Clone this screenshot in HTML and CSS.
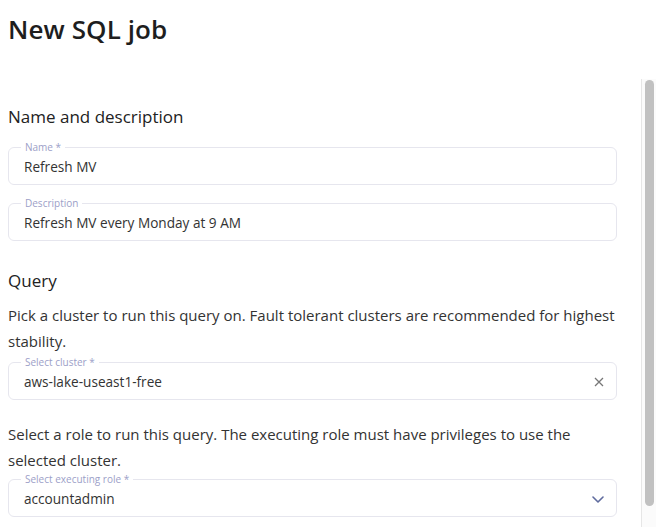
FILE: index.html
```html
<!DOCTYPE html>
<html>
<head>
<meta charset="utf-8">
<link rel="stylesheet" href="styles.css">
</head>
<body>
<h1 class="title">New SQL job</h1>
<div class="scroller">
  <div class="content">
    <h2 class="section">Name and description</h2>
    <fieldset class="field"><legend>Name *</legend><div class="value">Refresh MV</div></fieldset>
    <fieldset class="field"><legend>Description</legend><div class="value">Refresh MV every Monday at 9 AM</div></fieldset>

    <h2 class="section query">Query</h2>
    <p class="para">Pick a cluster to run this query on. Fault tolerant clusters are recommended for highest stability.</p>
    <fieldset class="field"><legend>Select cluster *</legend>
      <div class="value row"><span>aws-lake-useast1-free</span>
        <svg class="icon-x" width="10" height="10" viewBox="0 0 10 10"><path d="M1 1L9 9M9 1L1 9" stroke="#777" stroke-width="1.3" fill="none"/></svg>
      </div>
    </fieldset>

    <p class="para para2">Select a role to run this query. The executing role must have privileges to use the selected cluster.</p>
    <fieldset class="field"><legend>Select executing role *</legend>
      <div class="value row"><span>accountadmin</span>
        <svg class="icon-chev" width="12" height="7" viewBox="0 0 12 7"><path d="M1 1L6 6L11 1" stroke="#5f6b9e" stroke-width="1.6" fill="none" stroke-linecap="round" stroke-linejoin="round"/></svg>
      </div>
    </fieldset>
  </div>
  <div class="track" aria-hidden="true"><div class="thumb"></div></div>
</div>
</body>
</html>
```
FILE: styles.css
```css
html, body {
  margin: 0;
  padding: 0;
  background: #fff;
}
body {
  padding: 0 8px;
  font-family: "Open Sans", "DejaVu Sans", sans-serif;
  color: #333;
}
.title {
  margin: 0;
  padding-top: 11px;
  height: 79px;
  box-sizing: border-box;
  font-size: 26px;
  line-height: 36px;
  font-weight: 600;
  color: #1e1e1e;
  letter-spacing: 0.1px;
}
.scroller {
  height: 448px;
  overflow: hidden;
  display: flex;
}
.content {
  flex: 1;
  min-width: 0;
  padding: 26px 24px 22px 0;
}
.track {
  width: 14px;
  flex: none;
  border-left: 1px solid #e6e6e6;
  background: #fbfbfb;
}
.thumb {
  margin: 1px 2px 0 3px;
  height: 426px;
  background: #c1c1c1;
  border-radius: 5px;
}
.section {
  margin: 0 0 12px;
  font-size: 17px;
  line-height: 24px;
  font-weight: 500;
  color: #222;
}
.section.query {
  margin-top: 28px;
  margin-bottom: 9px;
}
.field {
  margin: 0 0 12px;
  padding: 0 12px 7px;
  border: 1px solid #e6e6ee;
  border-radius: 6px;
  min-width: 0;
}
.field legend {
  padding: 0 4px;
  font-size: 10px;
  line-height: 12px;
  color: #9ca0c8;
}
.value {
  padding: 4px 0 0 3px;
  font-size: 13.6px;
  line-height: 20px;
  color: #333;
}
.row {
  display: flex;
  align-items: center;
  justify-content: space-between;
}
.icon-x {
  margin-right: 0;
}
.icon-chev {
  margin-right: 0;
}
.para {
  margin: 0 0 2px;
  font-size: 15px;
  line-height: 26px;
  color: #333;
}
.para2 {
  margin-top: 21px;
  margin-bottom: 0;
}
```
